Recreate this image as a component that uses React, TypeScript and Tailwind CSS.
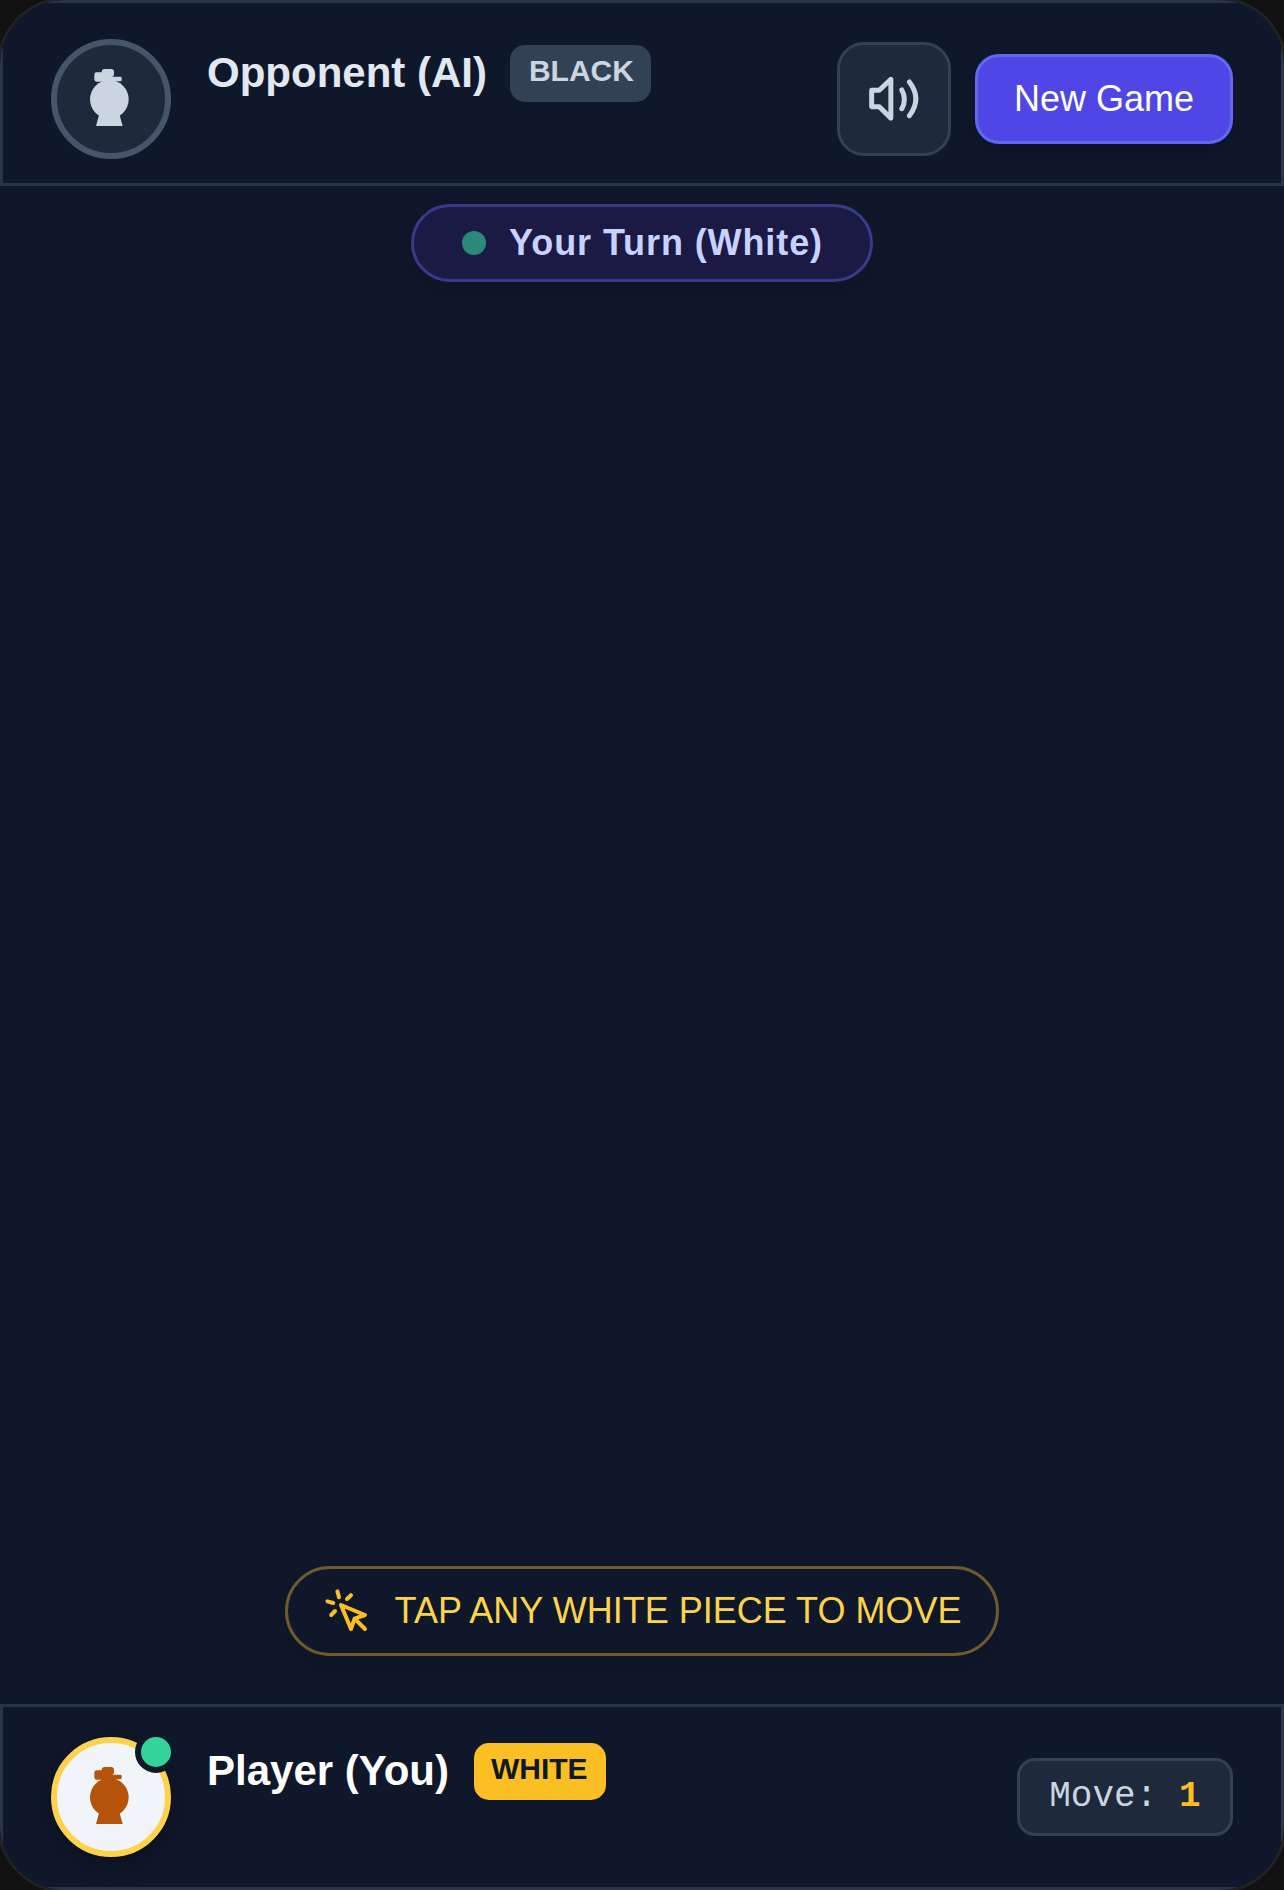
function ChessPiece({ className }: { className: string }) {
  return (
    <svg viewBox="0 0 117 171" className={className} fill="currentColor">
      <rect x="35" y="0" width="37" height="24" rx="9" />
      <rect x="13" y="10" width="47" height="28" rx="7" />
      <rect x="50" y="23" width="45" height="14" rx="4" />
      <rect x="40" y="30" width="35" height="26" />
      <circle cx="58" cy="91" r="58" />
      <path d="M28 135 18 171H98L88 135Z" />
    </svg>
  );
}

function SoundIcon() {
  return (
    <svg
      viewBox="115 120 155 145"
      className="w-[52px] h-[48px] text-[#cbd5e1]"
      fill="none"
      stroke="currentColor"
      strokeWidth="15"
      strokeLinecap="round"
      strokeLinejoin="round"
    >
      <path d="M183 133V251L148 216H125V166H148Z" />
      <path d="M216 165Q232 193 216 222" />
      <path d="M239 141Q278 192 239 243" />
    </svg>
  );
}

function TapIcon() {
  return (
    <svg
      viewBox="0 0 24 24"
      className="w-12 h-12 text-[#fbbf24]"
      fill="none"
      stroke="currentColor"
      strokeWidth="2"
      strokeLinecap="round"
      strokeLinejoin="round"
    >
      <path d="m9 9 5 12 1.8-5.2L21 14Z" />
      <path d="M7.2 2.2 8 5.1" />
      <path d="m5.1 8-2.9-.8" />
      <path d="M14 4.1 12 6" />
      <path d="m6 12-1.9 2" />
      <path d="m16 16 5 5" />
    </svg>
  );
}

export default function App() {
  return (
    <div className="w-[1284px] h-[1890px] bg-[#111111] font-['Liberation_Sans',Arial,sans-serif]">
      <div className="w-full h-full flex flex-col rounded-[66px] overflow-hidden bg-[#0f172a] shadow-[0_0_0_3px_#222222]">
        <header className="h-[186px] shrink-0 flex justify-between border-[3px] border-[#2a3648] bg-[#0f172a] pl-12 pr-12 pt-9">
          <div className="flex items-start gap-9">
            <div className="w-[120px] h-[120px] rounded-full border-[6px] border-[#475569] bg-[#1e293b] flex items-center justify-center pr-[4px] pb-[4px]">
              <ChessPiece className="w-[39px] h-[57px] text-[#cbd5e1]" />
            </div>
            <div className="mt-[2px] flex items-center gap-6">
              <span className="pb-[2px] text-[42px] font-bold text-[#e2e8f0]">Opponent (AI)</span>
              <span className="pl-[19px] pr-[17px] pt-[9px] pb-[15px] leading-[33px] text-[30px] font-bold rounded-[15px] bg-[#334155] text-[#cbd5e1] -ml-[1px]">
                BLACK
              </span>
            </div>
          </div>
          <div className="flex items-center gap-6 h-[120px]">
            <button className="w-[114px] h-[114px] rounded-[27px] border-[3px] border-[#334155] bg-[#1e293b] flex items-center justify-center">
              <SoundIcon />
            </button>
            <button className="h-[90px] px-9 rounded-[24px] border-[3px] border-[#6366f1] bg-[#4f46e5] text-[36px] text-white shadow-[0_6px_18px_rgba(0,0,0,0.2)]">
              New Game
            </button>
          </div>
        </header>

        <main className="flex-1 flex flex-col items-center justify-between pt-[18px] pb-12">
          <div className="h-[78px] flex items-center gap-[23px] pl-12 pr-[47px] rounded-full border-[3px] border-[#3a3a8c] bg-[#1b1a45] shadow-[0_12px_30px_rgba(0,0,0,0.12)]">
            <span className="w-6 h-6 rounded-full bg-[#2a8a78]" />
            <span className="text-[36px] font-bold tracking-[0.9px] text-[#c7d2fe]">Your Turn (White)</span>
          </div>
          <div className="h-[90px] flex items-center gap-6 px-[35px] rounded-full border-[3px] border-[#6f5a2a] bg-[#0f172a] shadow-[0_12px_30px_rgba(0,0,0,0.12)]">
            <TapIcon />
            <span className="text-[36px] text-[#fcd34d]">TAP ANY WHITE PIECE TO MOVE</span>
          </div>
        </main>

        <footer className="h-[186px] shrink-0 flex justify-between border-[3px] border-[#2a3648] bg-[#0f172a] px-12 pt-[30px]">
          <div className="flex items-start gap-9">
            <div className="relative w-[120px] h-[120px] rounded-full border-[6px] border-[#ffd24d] bg-[#f1f5f9] flex items-center justify-center pr-[4px] pb-[4px] shadow-[0_6px_24px_rgba(0,0,0,0.3)]">
              <ChessPiece className="w-[39px] h-[57px] text-[#b45309]" />
              <span className="absolute -top-[12px] -right-[12px] w-[42px] h-[42px] rounded-full border-[6px] border-[#0f172a] bg-[#34d399]" />
            </div>
            <div className="mt-[2px] flex items-center gap-6">
              <span className="pb-[2px] text-[42px] font-bold text-white">Player (You)</span>
              <span className="ml-[1px] pl-[17px] pr-[18px] pt-[9px] pb-[15px] leading-[33px] text-[30px] font-bold rounded-[15px] bg-[#fbbf24] text-[#0f172a]">
                WHITE
              </span>
            </div>
          </div>
          <div className="flex items-center h-[120px]">
            <div className="h-[78px] flex items-center px-[29.5px] rounded-[18px] border-[3px] border-[#334155] bg-[#1e293b] font-['Liberation_Mono',monospace] text-[36px] text-[#cbd5e1] whitespace-pre">
              Move: <span className="font-bold text-[#fbbf24]">1</span>
            </div>
          </div>
        </footer>
      </div>
    </div>
  );
}
